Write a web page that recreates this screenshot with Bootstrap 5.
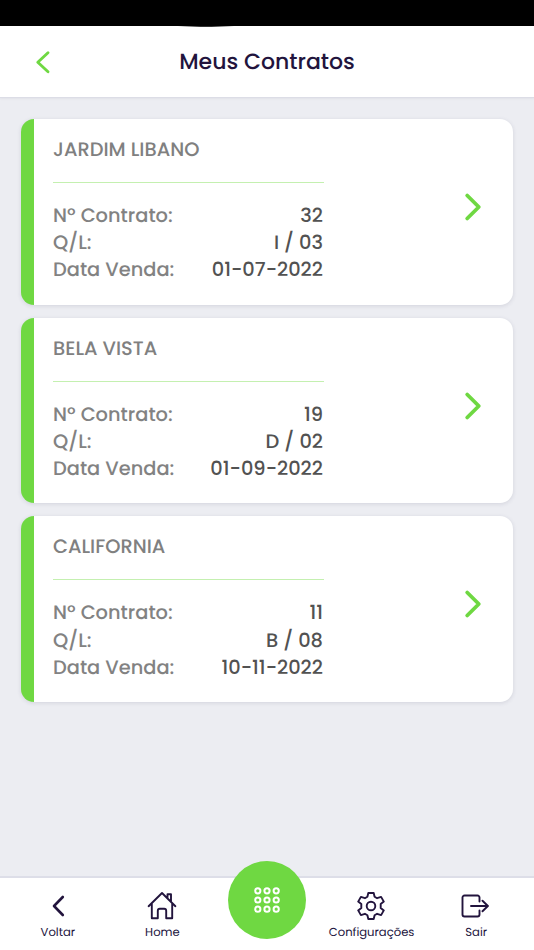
<!DOCTYPE html>
<html lang="pt-BR">
<head>
<meta charset="utf-8">
<meta name="viewport" content="width=device-width, initial-scale=1">
<title>Meus Contratos</title>
<link href="https://cdn.jsdelivr.net/npm/bootstrap@5.3.0/dist/css/bootstrap.min.css" rel="stylesheet">
<style>
:root{--green:#6fd842;--ink:#22143d}
body{background:#ecedf2;font-family:Poppins,Inter,"Open Sans",sans-serif;color:var(--ink);height:950px;overflow:hidden;text-rendering:geometricPrecision}
svg{display:block;fill:none;stroke:currentColor;stroke-linecap:round;stroke-linejoin:round}
.status-bar{height:26px;background:#000}
.top-bar{height:72px;border-bottom:1px solid #dcdde6;box-shadow:0 1px 2px rgba(60,60,90,.06);display:grid;grid-template-columns:86px 1fr 86px;background:#fff linear-gradient(90deg,transparent,#333 40%,#333 60%,transparent) 178px 0/56px 1px no-repeat}
.top-bar h1{font-size:22px;font-weight:500;line-height:32px}
.accent{color:var(--green)}
.contracts{padding:21px 21px 0;gap:13px}
.contract{height:185.65px;border-left:13px solid var(--green);border-radius:13px;box-shadow:0 1px 4px rgba(60,60,90,.14);padding:17.200px 31px 0 19px}
.details{width:271px}
.contract h2{font-size:19.4px;font-weight:500;line-height:27px;color:#808080;margin:0 0 19px}
.rule{height:1px;background:#c4f0b0;margin-bottom:19px}
.line{font-size:19.4px;font-weight:500;line-height:27.1px}
.line dt{font-weight:500;color:#828282}
.line dd{color:#525252;margin:0 1px 0 0}
.go{margin-top:-27px}
.bottom-bar{height:74px;border-top:2px solid #dddee8;display:grid;grid-template-columns:repeat(5,104.6px);justify-content:center;font-size:11.6px;line-height:20px}
.bottom-bar a{color:var(--ink)}
.tab-icon{height:34px;margin-top:11px;display:flex;align-items:center;justify-content:center}
.nudge{padding-right:2px}
.menu-button{width:78px;height:78px;background:var(--green);margin-top:-17px}
</style>
</head>
<body class="d-flex flex-column">
<div class="status-bar flex-shrink-0"></div>
<header class="top-bar align-items-center flex-shrink-0">
  <a href="#" class="accent d-flex justify-content-center" aria-label="Voltar"><svg width="16" height="24" viewBox="0 0 16 24" stroke-width="2.9"><path d="M13 2.700 2.800 12.200 13 21.700"/></svg></a>
  <h1 class="text-center m-0">Meus Contratos</h1>
</header>
<main class="contracts d-flex flex-column flex-grow-1">
  <article class="contract bg-white d-flex justify-content-between">
    <div class="details">
      <h2>JARDIM LIBANO</h2>
      <div class="rule"></div>
      <dl class="m-0">
        <div class="line d-flex justify-content-between"><dt>Nº Contrato:</dt><dd>32</dd></div>
        <div class="line d-flex justify-content-between"><dt>Q/L:</dt><dd>I / 03</dd></div>
        <div class="line d-flex justify-content-between"><dt>Data Venda:</dt><dd>01-07-2022</dd></div>
      </dl>
    </div>
    <a href="#" class="go accent align-self-center" aria-label="Abrir"><svg width="18" height="30" viewBox="0 0 18 30" stroke-width="3.800"><path d="M3.200 3.500 14.800 15 3.200 26.500"/></svg></a>
  </article>
  <article class="contract bg-white d-flex justify-content-between">
    <div class="details">
      <h2>BELA VISTA</h2>
      <div class="rule"></div>
      <dl class="m-0">
        <div class="line d-flex justify-content-between"><dt>Nº Contrato:</dt><dd>19</dd></div>
        <div class="line d-flex justify-content-between"><dt>Q/L:</dt><dd>D / 02</dd></div>
        <div class="line d-flex justify-content-between"><dt>Data Venda:</dt><dd>01-09-2022</dd></div>
      </dl>
    </div>
    <a href="#" class="go accent align-self-center" aria-label="Abrir"><svg width="18" height="30" viewBox="0 0 18 30" stroke-width="3.800"><path d="M3.200 3.500 14.800 15 3.200 26.500"/></svg></a>
  </article>
  <article class="contract bg-white d-flex justify-content-between">
    <div class="details">
      <h2>CALIFORNIA</h2>
      <div class="rule"></div>
      <dl class="m-0">
        <div class="line d-flex justify-content-between"><dt>Nº Contrato:</dt><dd>11</dd></div>
        <div class="line d-flex justify-content-between"><dt>Q/L:</dt><dd>B / 08</dd></div>
        <div class="line d-flex justify-content-between"><dt>Data Venda:</dt><dd>10-11-2022</dd></div>
      </dl>
    </div>
    <a href="#" class="go accent align-self-center" aria-label="Abrir"><svg width="18" height="30" viewBox="0 0 18 30" stroke-width="3.800"><path d="M3.200 3.500 14.800 15 3.200 26.500"/></svg></a>
  </article>
</main>
<nav class="bottom-bar bg-white flex-shrink-0">
  <a href="#" class="text-decoration-none text-center"><span class="tab-icon"><svg width="14" height="22" viewBox="0 0 14 22" stroke-width="2.600"><path d="M11.800 2 3 11l8.800 9"/></svg></span>Voltar</a>
  <a href="#" class="text-decoration-none text-center"><span class="tab-icon"><svg width="30" height="30" viewBox="0 0 30 30" stroke-width="1.900"><path d="M1.600 15.200 15 2l13.400 13.200M4.800 12.500v14.800h6v-7.500a2 2 0 0 1 2-2h4.400a2 2 0 0 1 2 2v7.500h6V12.500M20.500 7V3.300h3.500v7"/></svg></span>Home</a>
  <a href="#" class="d-flex justify-content-center" aria-label="Menu"><span class="menu-button rounded-circle d-flex align-items-center justify-content-center text-white"><svg width="26" height="26" viewBox="0 0 26 26" stroke-width="2"><circle cx="3.800" cy="3.800" r="2.600"/><circle cx="13" cy="3.800" r="2.600"/><circle cx="22.200" cy="3.800" r="2.600"/><circle cx="3.800" cy="13" r="2.600"/><circle cx="13" cy="13" r="2.600"/><circle cx="22.200" cy="13" r="2.600"/><circle cx="3.800" cy="22.200" r="2.600"/><circle cx="13" cy="22.200" r="2.600"/><circle cx="22.200" cy="22.200" r="2.600"/></svg></span></a>
  <a href="#" class="text-decoration-none text-center"><span class="tab-icon nudge"><svg width="28" height="28" viewBox="0 0 28 28" stroke-width="1.900"><circle cx="14" cy="14" r="4.300"/><path d="M11.300 1h5.400l.9 3.700 2.500 1.500 4-1.300 2.700 4.700-3.100 2.500v3.800l3.100 2.500-2.700 4.700-4-1.300-2.500 1.500-.9 3.700h-5.400l-.9-3.700-2.500-1.500-4 1.300-2.700-4.700 3.100-2.500v-3.800L1.200 9.600l2.700-4.700 4 1.300 2.500-1.500z"/></svg></span>Configurações</a>
  <a href="#" class="text-decoration-none text-center"><span class="tab-icon nudge"><svg width="28" height="24" viewBox="0 0 28 24" stroke-width="1.900"><path d="M18.500 7.500v-4a2 2 0 0 0-2-2h-13a2 2 0 0 0-2 2v17a2 2 0 0 0 2 2h13a2 2 0 0 0 2-2v-4M10 12h17M21.500 6.700l5.400 5.300-5.400 5.300"/></svg></span>Sair</a>
</nav>
<script src="https://cdn.jsdelivr.net/npm/bootstrap@5.3.0/dist/js/bootstrap.bundle.min.js"></script>
</body>
</html>
